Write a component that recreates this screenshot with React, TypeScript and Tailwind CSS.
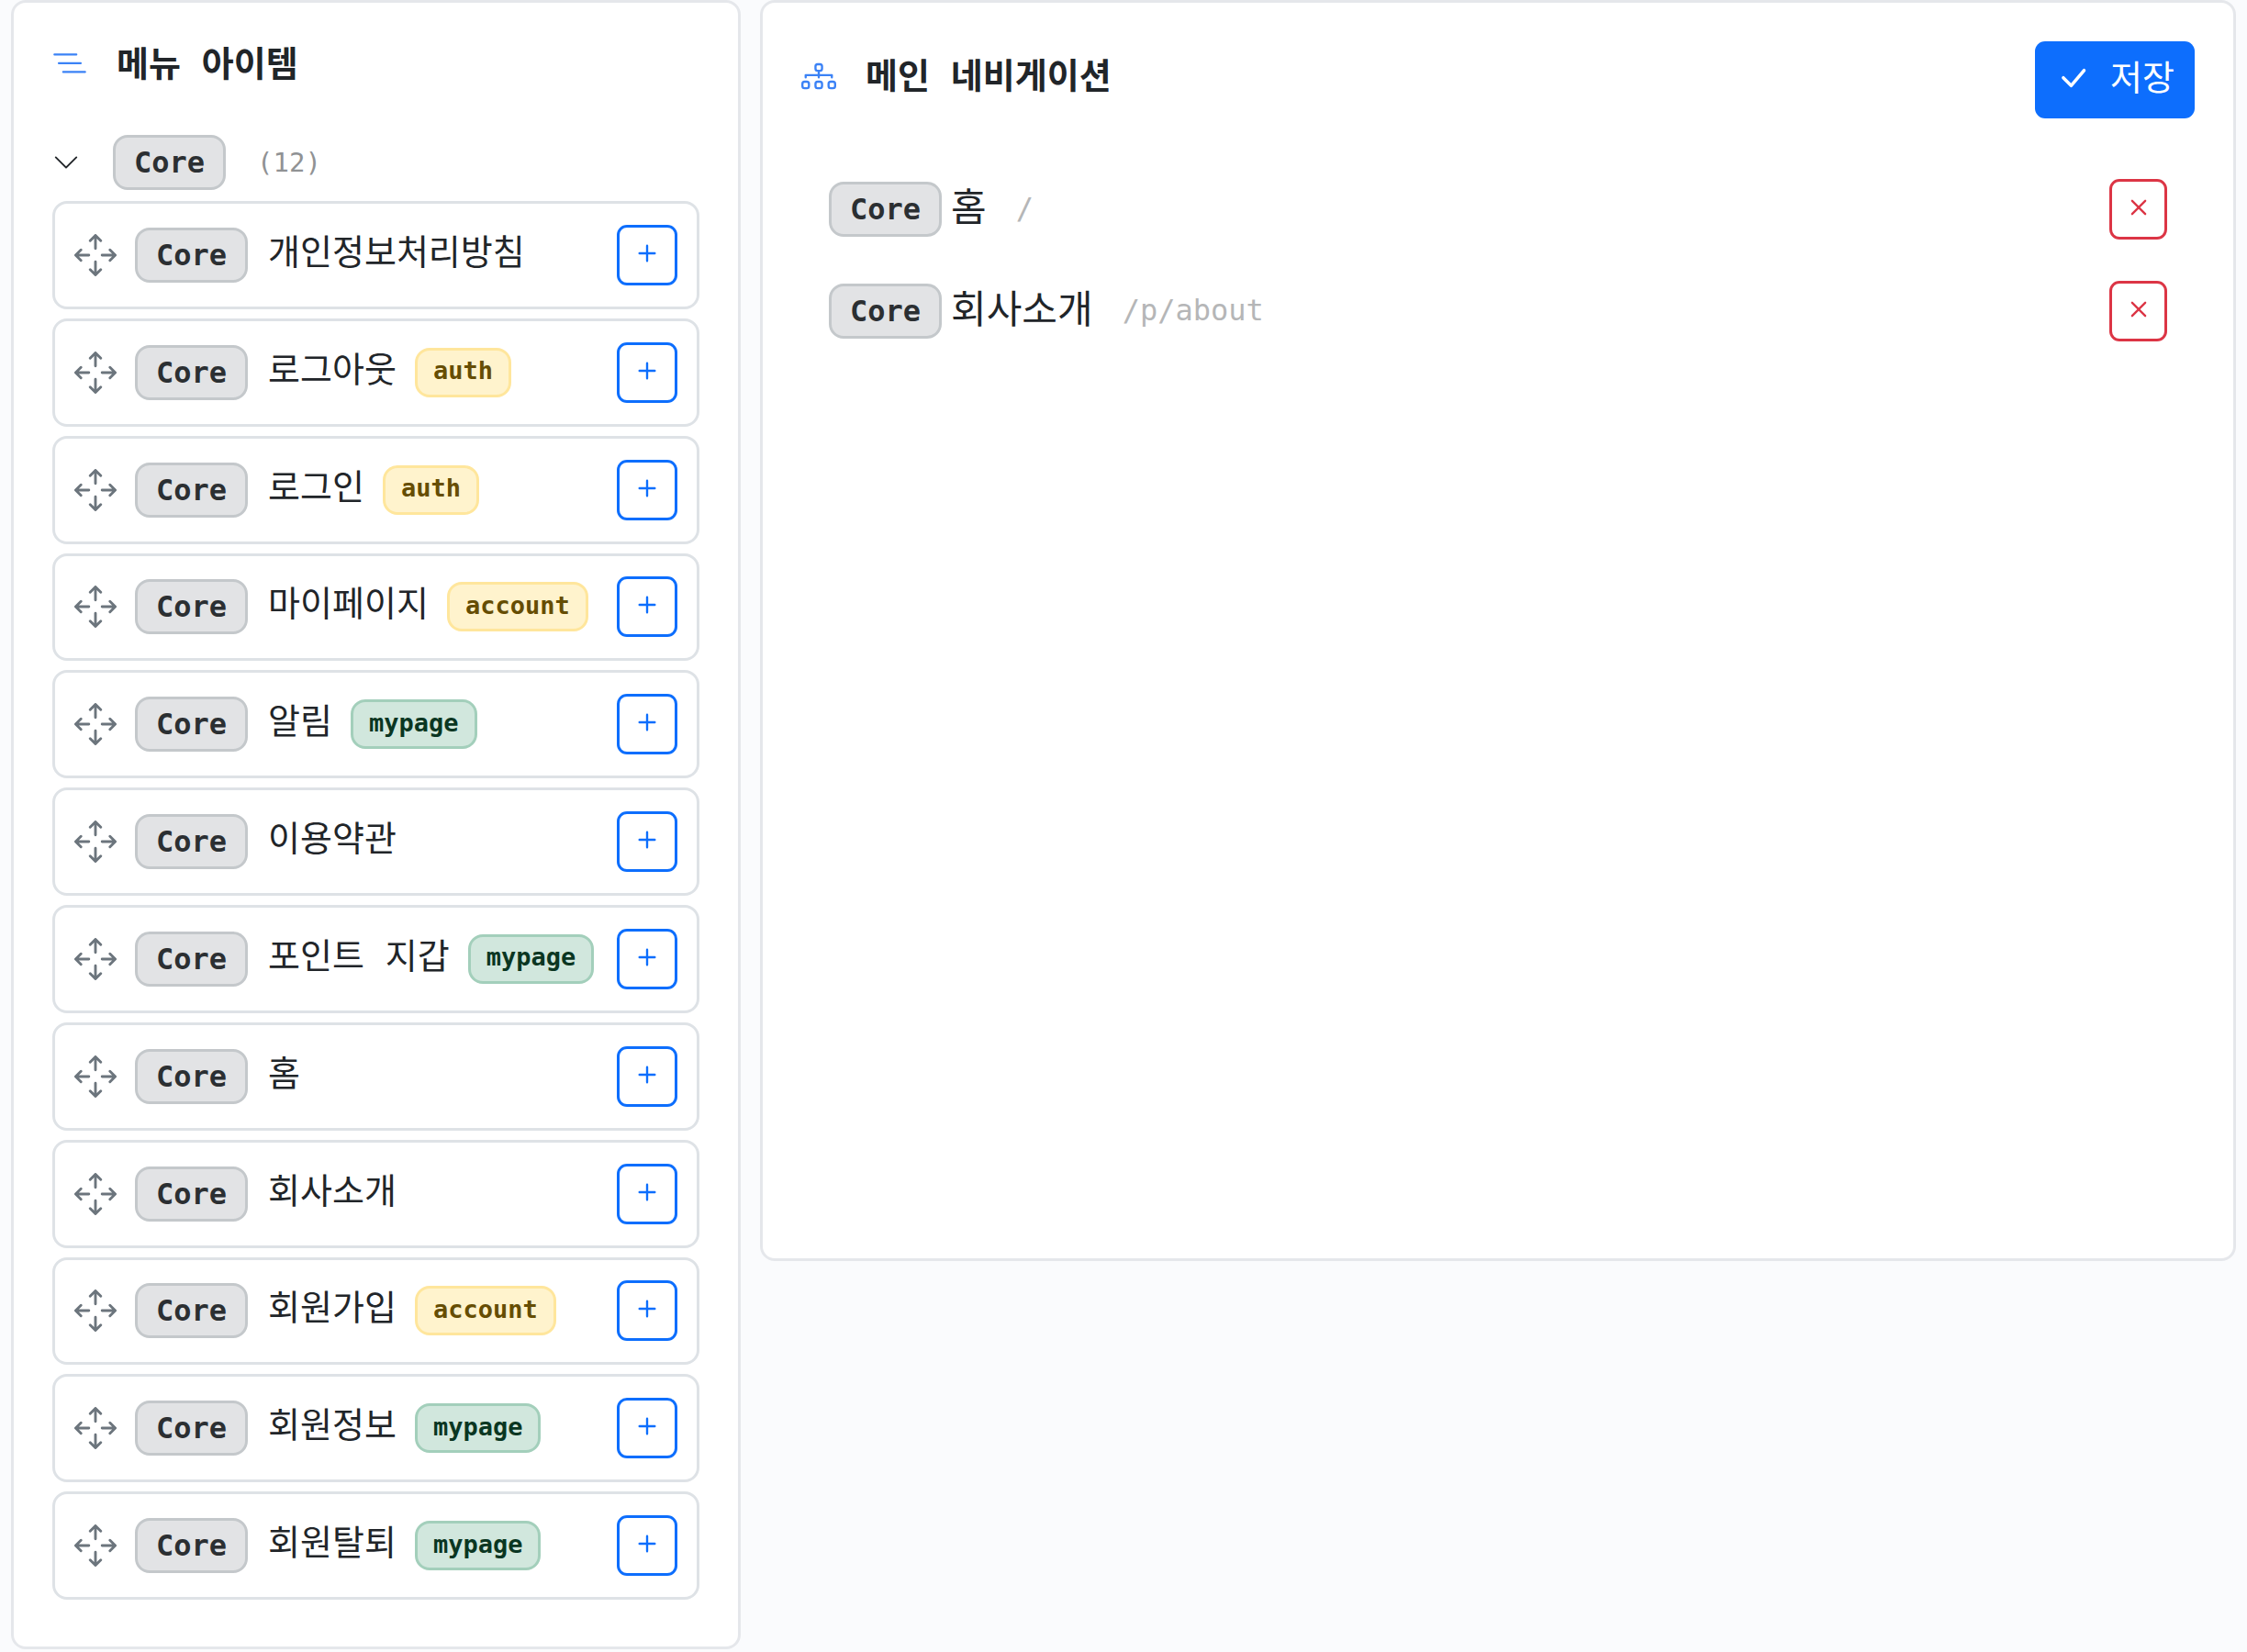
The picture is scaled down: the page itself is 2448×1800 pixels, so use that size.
import { useState } from 'react';
import {
  BsArrowsMove,
  BsCheckLg,
  BsChevronDown,
  BsDiagram3,
  BsListNested,
  BsPlus,
  BsX,
} from 'react-icons/bs';

interface MenuItem {
  name: string;
  path: string;
  tag?: 'auth' | 'account' | 'mypage';
}

const MENU_ITEMS: MenuItem[] = [
  { name: '개인정보처리방침', path: '/p/privacy' },
  { name: '로그아웃', path: '/logout', tag: 'auth' },
  { name: '로그인', path: '/login', tag: 'auth' },
  { name: '마이페이지', path: '/mypage', tag: 'account' },
  { name: '알림', path: '/notifications', tag: 'mypage' },
  { name: '이용약관', path: '/p/terms' },
  { name: '포인트 지갑', path: '/wallet', tag: 'mypage' },
  { name: '홈', path: '/' },
  { name: '회사소개', path: '/p/about' },
  { name: '회원가입', path: '/register', tag: 'account' },
  { name: '회원정보', path: '/profile', tag: 'mypage' },
  { name: '회원탈퇴', path: '/withdraw', tag: 'mypage' },
];

const TAG_STYLES = {
  auth: 'border-[#ffe69c] bg-[#fff3cd] text-[#664d03]',
  account: 'border-[#ffe69c] bg-[#fff3cd] text-[#664d03]',
  mypage: 'border-[#a3cfbb] bg-[#d1e7dd] text-[#0a3622]',
};

const CoreBadge = () => (
  <span className="flex h-[60px] shrink-0 items-center rounded-[16px] border-3 border-[#c4c8cb] bg-[#e2e3e5] px-5 text-[32px] leading-none font-bold text-[#2b2f32]">
    Core
  </span>
);

interface MenuCardProps {
  item: MenuItem;
  onAdd: (item: MenuItem) => void;
}

const MenuCard = ({ item, onAdd }: MenuCardProps) => {
  return (
    <li className="flex items-center rounded-[16px] border-3 border-[#dee2e6] bg-white px-[21px]">
      <BsArrowsMove className="mr-5 size-[46px] shrink-0 cursor-move text-[#6c757d]" />
      <CoreBadge />
      <span className="ml-[22px] pb-[6px] text-[38px] leading-[56px] whitespace-nowrap">
        {item.name}
      </span>
      {item.tag && (
        <span
          className={`ml-5 flex h-[54px] items-center rounded-[16px] border-3 px-[17px] pb-1 text-[27px] leading-none font-bold ${TAG_STYLES[item.tag]}`}
        >
          {item.tag}
        </span>
      )}
      <button
        type="button"
        aria-label={`${item.name} 추가`}
        onClick={() => onAdd(item)}
        className="ml-auto flex size-[66px] shrink-0 items-center justify-center rounded-[11px] border-3 border-[#0d6efd] pb-1 text-[#0d6efd]"
      >
        <BsPlus className="size-[38px]" />
      </button>
    </li>
  );
};

interface NavRowProps {
  item: MenuItem;
  onRemove: (item: MenuItem) => void;
}

const NavRow = ({ item, onRemove }: NavRowProps) => {
  return (
    <li className="flex items-center">
      <CoreBadge />
      <span className="ml-[10px] pb-[2px] text-[42px] leading-[60px] whitespace-nowrap">
        {item.name}
      </span>
      <span className="ml-8 pb-[2px] text-[32px] leading-none text-[#b5b6b7]">
        {item.path}
      </span>
      <button
        type="button"
        aria-label={`${item.name} 삭제`}
        onClick={() => onRemove(item)}
        className="ml-auto flex h-[66px] w-[63px] shrink-0 items-center justify-center rounded-[11px] border-3 border-[#dc3545] pb-1 text-[#dc3545]"
      >
        <BsX className="size-[38px]" />
      </button>
    </li>
  );
};

export default function App() {
  const [open, setOpen] = useState(true);
  const [nav, setNav] = useState<MenuItem[]>([MENU_ITEMS[7], MENU_ITEMS[8]]);

  const handleAdd = (item: MenuItem) => {
    if (!nav.includes(item)) {
      setNav([...nav, item]);
    }
  };

  const handleRemove = (item: MenuItem) => {
    setNav(nav.filter((n) => n !== item));
  };

  return (
    <main className="grid min-h-screen grid-cols-[795fr_1608fr] items-start gap-[21px] bg-[#fafbfd] px-3 font-['DejaVu_Sans_Mono','Noto_Sans_CJK_KR',monospace] text-[#212529]">
      <section className="rounded-[16px] border-3 border-[#e5e7eb] bg-white px-[42px] pt-[42px] pb-[51px]">
        <h2 className="flex h-[50px] items-center gap-8 text-[38px] leading-[50px] font-bold">
          <BsListNested className="size-[38px] text-[#3b82f6]" />
          메뉴 아이템
        </h2>

        <button
          type="button"
          aria-expanded={open}
          onClick={() => setOpen(!open)}
          className="mt-[52px] flex w-full items-center"
        >
          <BsChevronDown className="mr-9 size-[30px]" />
          <CoreBadge />
          <span className="ml-[34px] text-[29px] leading-none text-[#909294]">
            ({MENU_ITEMS.length})
          </span>
        </button>

        {open && (
          <ul className="mt-3 grid min-h-[1524px] auto-rows-fr gap-[10px]">
            {MENU_ITEMS.map((item) => (
              <MenuCard key={item.name} item={item} onAdd={handleAdd} />
            ))}
          </ul>
        )}
      </section>

      <section className="min-h-[1374px] rounded-[16px] border-3 border-[#e5e7eb] bg-white px-[42px] py-[42px]">
        <div className="flex items-center justify-between">
          <h2 className="flex items-center gap-8 pb-[9px] text-[38px] leading-[50px] font-bold">
            <BsDiagram3 className="size-[38px] text-[#3b82f6]" />
            메인 네비게이션
          </h2>
          <button
            type="button"
            className="flex h-[84px] items-center gap-[22px] rounded-[11px] bg-[#0d6efd] px-[22px] pb-1 text-[38px] leading-[50px] text-white"
          >
            <BsCheckLg className="size-[38px]" />
            저장
          </button>
        </div>

        <ul className="mt-[66px] flex flex-col gap-[45px] px-[30px]">
          {nav.map((item) => (
            <NavRow key={item.name} item={item} onRemove={handleRemove} />
          ))}
        </ul>
      </section>
    </main>
  );
}
